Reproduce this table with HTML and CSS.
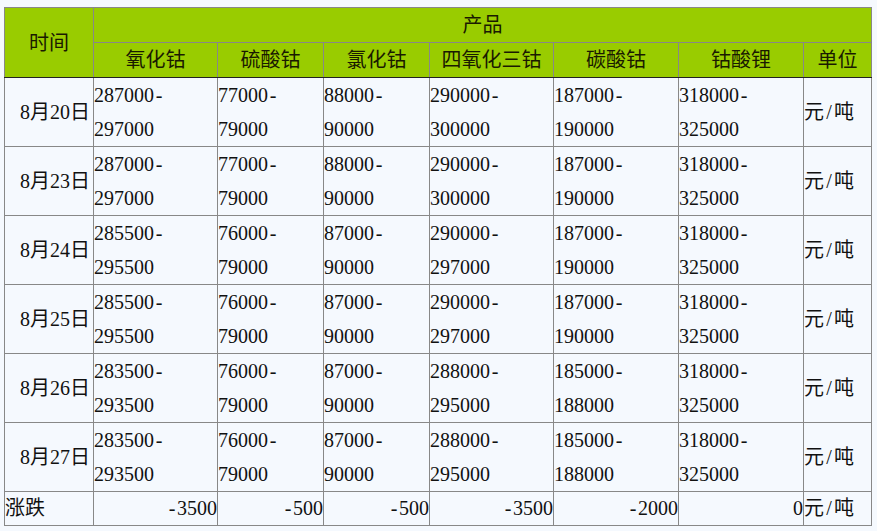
FILE: index.html
```html
<!DOCTYPE html>
<html lang="zh">
<head>
<meta charset="utf-8">
<link rel="stylesheet" href="styles.css">
</head>
<body>
<table class="price">
  <colgroup>
    <col class="c-date"><col class="c-w124"><col class="c-w106"><col class="c-w106"><col class="c-w124"><col class="c-w125"><col class="c-w125"><col class="c-unit">
  </colgroup>
  <thead>
    <tr class="h1">
      <th rowspan="2" class="th-time">时间</th>
      <th colspan="7">产品</th>
    </tr>
    <tr class="h2">
      <th>氧化钴</th><th>硫酸钴</th><th>氯化钴</th><th>四氧化三钴</th><th>碳酸钴</th><th>钴酸锂</th><th>单位</th>
    </tr>
  </thead>
  <tbody>
    <tr>
      <td class="date">8月20日</td>
      <td>287000<span class="hw">-</span><br>297000</td><td>77000<span class="hw">-</span><br>79000</td><td>88000<span class="hw">-</span><br>90000</td><td>290000<span class="hw">-</span><br>300000</td><td>187000<span class="hw">-</span><br>190000</td><td>318000<span class="hw">-</span><br>325000</td><td>元<span class="hw">/</span>吨</td>
    </tr>
    <tr>
      <td class="date">8月23日</td>
      <td>287000<span class="hw">-</span><br>297000</td><td>77000<span class="hw">-</span><br>79000</td><td>88000<span class="hw">-</span><br>90000</td><td>290000<span class="hw">-</span><br>300000</td><td>187000<span class="hw">-</span><br>190000</td><td>318000<span class="hw">-</span><br>325000</td><td>元<span class="hw">/</span>吨</td>
    </tr>
    <tr>
      <td class="date">8月24日</td>
      <td>285500<span class="hw">-</span><br>295500</td><td>76000<span class="hw">-</span><br>79000</td><td>87000<span class="hw">-</span><br>90000</td><td>290000<span class="hw">-</span><br>297000</td><td>187000<span class="hw">-</span><br>190000</td><td>318000<span class="hw">-</span><br>325000</td><td>元<span class="hw">/</span>吨</td>
    </tr>
    <tr>
      <td class="date">8月25日</td>
      <td>285500<span class="hw">-</span><br>295500</td><td>76000<span class="hw">-</span><br>79000</td><td>87000<span class="hw">-</span><br>90000</td><td>290000<span class="hw">-</span><br>297000</td><td>187000<span class="hw">-</span><br>190000</td><td>318000<span class="hw">-</span><br>325000</td><td>元<span class="hw">/</span>吨</td>
    </tr>
    <tr>
      <td class="date">8月26日</td>
      <td>283500<span class="hw">-</span><br>293500</td><td>76000<span class="hw">-</span><br>79000</td><td>87000<span class="hw">-</span><br>90000</td><td>288000<span class="hw">-</span><br>295000</td><td>185000<span class="hw">-</span><br>188000</td><td>318000<span class="hw">-</span><br>325000</td><td>元<span class="hw">/</span>吨</td>
    </tr>
    <tr>
      <td class="date">8月27日</td>
      <td>283500<span class="hw">-</span><br>293500</td><td>76000<span class="hw">-</span><br>79000</td><td>87000<span class="hw">-</span><br>90000</td><td>288000<span class="hw">-</span><br>295000</td><td>185000<span class="hw">-</span><br>188000</td><td>318000<span class="hw">-</span><br>325000</td><td>元<span class="hw">/</span>吨</td>
    </tr>
    <tr class="total">
      <td>涨跌</td>
      <td class="num"><span class="hw">-</span>3500</td><td class="num"><span class="hw">-</span>500</td><td class="num"><span class="hw">-</span>500</td><td class="num"><span class="hw">-</span>3500</td><td class="num"><span class="hw">-</span>2000</td><td class="num">0</td><td>元<span class="hw">/</span>吨</td>
    </tr>
  </tbody>
</table>
</body>
</html>
```

FILE: styles.css
```css
html, body {
  background: #f5f9fe;
}
body {
  margin: 0;
  padding: 7px 0 0 4px;
  font-family: "Liberation Serif", "Noto Sans CJK SC", serif;
  font-size: 20px;
  color: #111;
}
.price {
  border-collapse: collapse;
  table-layout: fixed;
  width: 868px;
  border: 1px solid #222;
}
.c-date { width: 89px; }
.c-w124 { width: 124px; }
.c-w106 { width: 106px; }
.c-w125 { width: 125px; }
.c-unit { width: 68px; }

.price th,
.price td {
  border: 1px solid #888;
  padding: 0;
  font-weight: normal;
  vertical-align: middle;
  white-space: nowrap;
}
.price th {
  background: #99cc00;
  text-align: center;
  height: 34px;
  line-height: 34px;
  color: #1a1a00;
}
.price thead tr.h2 th {
  border-bottom: 1px solid #222;
}
.price .th-time {
  border-bottom: 1px solid #222;
}
.price td {
  text-align: left;
  line-height: 34px;
  height: 68px;
}
.price td.date {
  text-align: right;
  padding-right: 3px;
}
.price tr.total td {
  height: 33px;
  line-height: 33px;
}
.price td.num {
  text-align: right;
}
.hw {
  display: inline-block;
  width: 10px;
  text-align: center;
}
```
